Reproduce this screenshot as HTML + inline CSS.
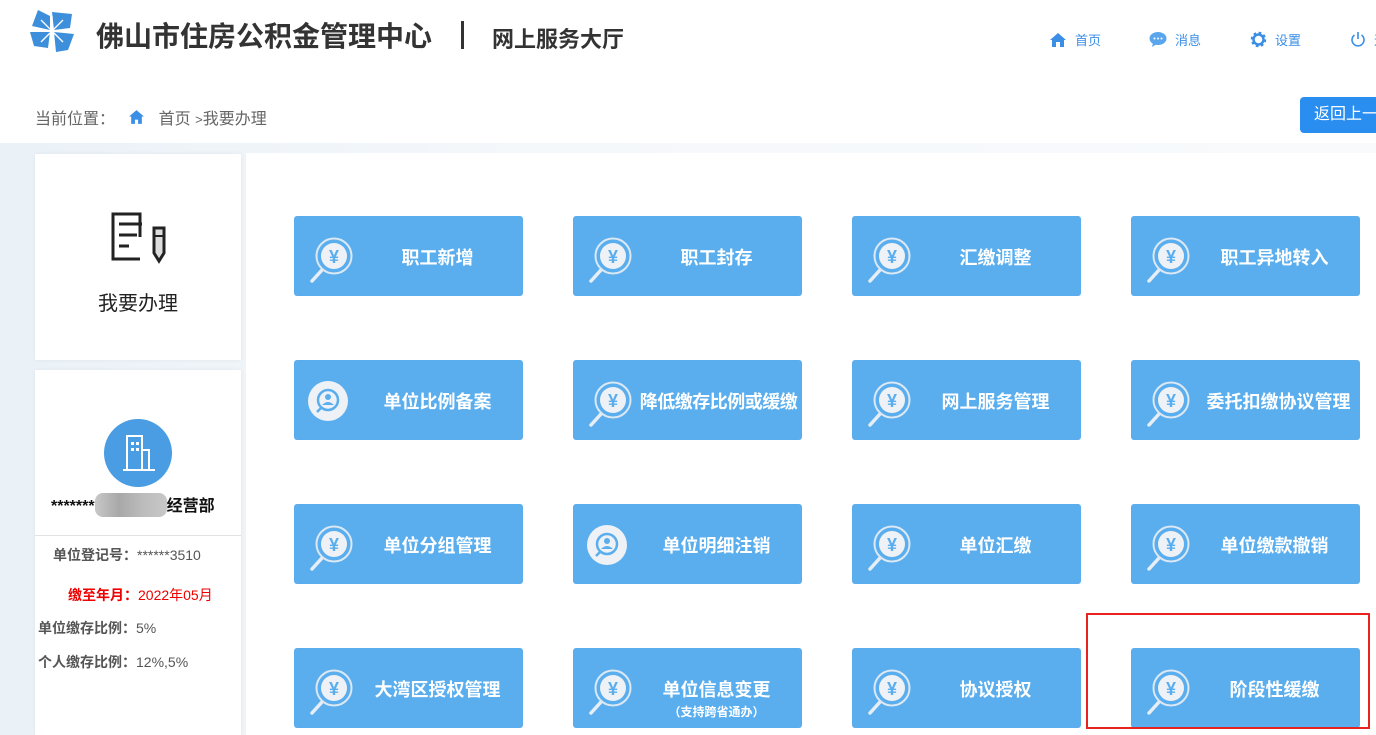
<!DOCTYPE html>
<html><head><meta charset="utf-8"><style>
*{margin:0;padding:0;box-sizing:border-box}
body{width:1376px;height:735px;overflow:hidden;background:#fff;font-family:"Liberation Sans","Noto Sans CJK SC",sans-serif;position:relative}
.abs{position:absolute}
.title{left:96px;top:15px;font-size:28px;font-weight:bold;color:#333}
.sub{left:492px;top:22px;font-size:22px;font-weight:bold;color:#333}
.nav{top:30px;font-size:13px;color:#3a8ee6;display:flex;align-items:center;gap:8px}
.crumb{left:35px;top:105px;font-size:16px;color:#666}
.back{left:1300px;top:97px;width:90px;height:36px;background:#2a8ef0;border-radius:4px;color:#fff;font-size:16px;padding:8px 0 0 14px;line-height:20px}
.bg{left:0;top:143px;width:1376px;height:592px;background:linear-gradient(90deg,#eaf1f7,#f5f8fb 40%,#f8fafc)}
.main{left:246px;top:153px;width:1130px;height:582px;background:#fff}
.card{background:#fff;box-shadow:0 0 4px rgba(0,0,0,.06)}
.btn{position:absolute;width:229px;height:80px;background:#5aaeee;border-radius:3px;color:#fff;font-weight:bold;font-size:18px}
.btn svg{position:absolute;left:0;top:0}
.btn span{position:absolute;left:58px;right:0;top:31px;text-align:center;line-height:22px}
.info{font-size:14px;color:#555}
.info b{font-weight:bold}
</style></head><body>
<svg class="abs" style="left:28px;top:8px" width="48" height="46" viewBox="0 0 48 46">
<polygon points="10,2 22,8 22,22 4,18" fill="#3d8fdc"/>
<polygon points="24,4 44,6 42,20 26,22" fill="#3d8fdc"/>
<polygon points="2,24 22,24 20,40 6,38" fill="#3d8fdc"/>
<polygon points="26,24 46,26 40,42 28,44" fill="#3d8fdc"/>
<g stroke="#fff" stroke-width="1.3"><line x1="24" y1="8" x2="24" y2="40"/><line x1="10" y1="23" x2="40" y2="23"/><line x1="13" y1="12" x2="35" y2="34"/><line x1="35" y1="12" x2="13" y2="34"/></g>
</svg>
<div class="abs title">佛山市住房公积金管理中心</div>
<div class="abs" style="left:461px;top:21px;width:3px;height:28px;background:#333"></div>
<div class="abs sub">网上服务大厅</div>
<div class="abs nav" style="left:1049px"><svg width="18" height="16" viewBox="0 0 18 16"><path d="M9 1 L1 8 H3 V15 H7 V10 H11 V15 H15 V8 H17Z" fill="#3a8ee6"/></svg>首页</div>
<div class="abs nav" style="left:1149px"><svg width="18" height="17" viewBox="0 0 18 17"><ellipse cx="9" cy="7.5" rx="8.5" ry="6.5" fill="#5aa6ec"/><path d="M4 12 L3 16 L8 13Z" fill="#5aa6ec"/><circle cx="5.5" cy="7.5" r="1" fill="#fff"/><circle cx="9" cy="7.5" r="1" fill="#fff"/><circle cx="12.5" cy="7.5" r="1" fill="#fff"/></svg>消息</div>
<div class="abs nav" style="left:1250px"><svg width="17" height="17" viewBox="0 0 17 17"><circle cx="8.5" cy="8.5" r="6" fill="none" stroke="#3a8ee6" stroke-width="3.5" stroke-dasharray="2.4 2.3"/><circle cx="8.5" cy="8.5" r="5" fill="none" stroke="#3a8ee6" stroke-width="2.5"/></svg>设置</div>
<div class="abs nav" style="left:1350px"><svg width="16" height="17" viewBox="0 0 16 17"><path d="M4.5 4 A6 6 0 1 0 11.5 4" fill="none" stroke="#3a8ee6" stroke-width="1.6"/><line x1="8" y1="1" x2="8" y2="8" stroke="#3a8ee6" stroke-width="1.6"/></svg>退</div>
<div class="abs crumb">当前位置：&nbsp;&nbsp;&nbsp;<svg width="17" height="16" viewBox="0 0 16 15" style="vertical-align:-1px"><path d="M8 1 L1 7 H3 V14 H13 V7 H15Z" fill="#3a8ee6"/><path d="M6.5 14 V10 H9.5 V14" fill="#fff"/></svg>&nbsp;&nbsp;&nbsp;首页 <span style="font-size:13px">&gt;</span>我要办理</div>
<div class="abs back">返回上一</div>
<div class="abs bg"></div>
<div class="abs main"></div>
<div class="abs card" style="left:35px;top:154px;width:206px;height:206px">
<svg class="abs" style="left:75px;top:55px" width="58" height="56" viewBox="0 0 58 56"><path d="M30 28 V5 H3 V50 H30" fill="none" stroke="#222" stroke-width="3"/><path d="M9 15 H32 M9 26 H27 M9 37 H19" stroke="#222" stroke-width="3"/><path d="M44 19 H54 V44 L49 52 L44 44Z" fill="#ddd" stroke="#222" stroke-width="3"/><line x1="44" y1="27" x2="54" y2="27" stroke="#222" stroke-width="2"/></svg>
<div class="abs" style="left:0;right:0;top:133px;text-align:center;font-size:20px;color:#222">我要办理</div>
</div>
<div class="abs card" style="left:35px;top:370px;width:206px;height:365px">
<div class="abs" style="left:69px;top:49px;width:68px;height:68px;border-radius:50%;background:#4a9de2"></div>
<svg class="abs" style="left:86px;top:63px" width="36" height="40" viewBox="0 0 36 40"><path d="M2 37 H34 M6 37 V3 H21 V37 M21 17 H28 V37" fill="none" stroke="#fff" stroke-width="2"/><g fill="#fff"><rect x="10" y="9" width="3" height="3"/><rect x="15" y="9" width="3" height="3"/><rect x="10" y="15" width="3" height="3"/><rect x="15" y="15" width="3" height="3"/></g></svg>
<div class="abs" style="left:16px;top:122px;font-size:16px;font-weight:bold;color:#111">*******<span style="display:inline-block;width:72px;height:24px;background:linear-gradient(90deg,#c8c8c8,#a8a8a8,#bcbcbc,#c8c8c8);vertical-align:-6px;border-radius:8px"></span>经营部</div>
<div class="abs" style="left:0;top:165px;width:206px;height:1px;background:#e2e2e2"></div>
<div class="abs info" style="left:18px;top:175px"><b>单位登记号：</b>******3510</div>
<div class="abs info" style="left:33px;top:215px;color:#e00"><b>缴至年月：</b>2022年05月</div>
<div class="abs info" style="left:3px;top:248px"><b>单位缴存比例：</b>5%</div>
<div class="abs info" style="left:3px;top:282px"><b>个人缴存比例：</b>12%,5%</div>
</div>

<svg width="0" height="0" style="position:absolute"><defs>
<g id="y"><line x1="18" y1="65" x2="28" y2="54" stroke="#e8eef5" stroke-width="3.5" stroke-linecap="round"/><circle cx="40" cy="40" r="17.5" fill="none" stroke="#dce8f4" stroke-width="2"/><circle cx="40" cy="40" r="13" fill="#eef2f6"/><text x="40" y="47" text-anchor="middle" font-size="18" font-weight="bold" fill="#5aaeee" font-family="Liberation Sans,sans-serif">¥</text></g>
<g id="p"><circle cx="34" cy="41" r="20" fill="#eef2f6"/><circle cx="34" cy="40" r="10" fill="none" stroke="#5aaeee" stroke-width="2.5"/><circle cx="34" cy="37" r="3" fill="#5aaeee"/><path d="M28 45 Q34 39 40 45Z" fill="#5aaeee"/><line x1="27" y1="48" x2="23" y2="52" stroke="#5aaeee" stroke-width="2.5"/></g>
</defs></svg>

<div class="btn" style="left:294px;top:216px"><svg width="80" height="80"><use href="#y"/></svg><span>职工新增</span></div>
<div class="btn" style="left:573px;top:216px"><svg width="80" height="80"><use href="#y"/></svg><span>职工封存</span></div>
<div class="btn" style="left:852px;top:216px"><svg width="80" height="80"><use href="#y"/></svg><span>汇缴调整</span></div>
<div class="btn" style="left:1131px;top:216px"><svg width="80" height="80"><use href="#y"/></svg><span>职工异地转入</span></div>

<div class="btn" style="left:294px;top:360px"><svg width="80" height="80"><use href="#p"/></svg><span>单位比例备案</span></div>
<div class="btn" style="left:573px;top:360px"><svg width="80" height="80"><use href="#y"/></svg><span style="left:62px;letter-spacing:-0.5px">降低缴存比例或缓缴</span></div>
<div class="btn" style="left:852px;top:360px"><svg width="80" height="80"><use href="#y"/></svg><span>网上服务管理</span></div>
<div class="btn" style="left:1131px;top:360px"><svg width="80" height="80"><use href="#y"/></svg><span style="left:66px">委托扣缴协议管理</span></div>

<div class="btn" style="left:294px;top:504px"><svg width="80" height="80"><use href="#y"/></svg><span>单位分组管理</span></div>
<div class="btn" style="left:573px;top:504px"><svg width="80" height="80"><use href="#p"/></svg><span>单位明细注销</span></div>
<div class="btn" style="left:852px;top:504px"><svg width="80" height="80"><use href="#y"/></svg><span>单位汇缴</span></div>
<div class="btn" style="left:1131px;top:504px"><svg width="80" height="80"><use href="#y"/></svg><span>单位缴款撤销</span></div>

<div class="btn" style="left:294px;top:648px"><svg width="80" height="80"><use href="#y"/></svg><span>大湾区授权管理</span></div>
<div class="btn" style="left:573px;top:648px"><svg width="80" height="80"><use href="#y"/></svg><span style="top:31px">单位信息变更</span><span style="top:57px;font-size:12px;line-height:14px">（支持跨省通办）</span></div>
<div class="btn" style="left:852px;top:648px"><svg width="80" height="80"><use href="#y"/></svg><span>协议授权</span></div>
<div class="btn" style="left:1131px;top:648px"><svg width="80" height="80"><use href="#y"/></svg><span>阶段性缓缴</span></div>
<div class="abs" style="left:1086px;top:613px;width:284px;height:116px;border:2px solid #e8231f"></div>
</body></html>
